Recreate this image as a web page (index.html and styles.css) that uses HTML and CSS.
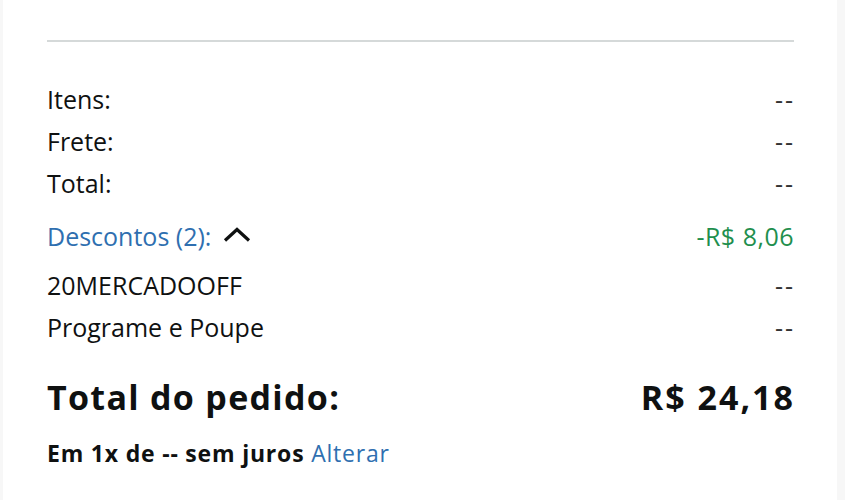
FILE: index.html
```html
<!DOCTYPE html>
<html lang="pt-BR">
<head>
<meta charset="utf-8">
<link rel="stylesheet" href="styles.css">
</head>
<body>
<div class="page">
  <div class="card">
    <div class="divider"></div>
    <div class="rows">
      <div class="row"><span>Itens:</span><span class="dash">--</span></div>
      <div class="row"><span>Frete:</span><span class="dash">--</span></div>
      <div class="row"><span>Total:</span><span class="dash">--</span></div>
      <div class="row discounts">
        <span class="toggle"><span class="link">Descontos (2):</span>
          <svg class="chev" width="28" height="15" viewBox="0 0 28 15"><path d="M2 13.5 L14 2.5 L26 13.5" fill="none" stroke="#0f1111" stroke-width="3.2"/></svg>
        </span>
        <span class="green">-R$ 8,06</span>
      </div>
      <div class="row code"><span>20MERCADOOFF</span><span class="dash">--</span></div>
      <div class="row"><span>Programe e Poupe</span><span class="dash">--</span></div>
    </div>
    <div class="grand"><span class="label">Total do pedido:</span><span class="amount">R$ 24,18</span></div>
    <div class="install">Em 1x de -- sem juros <span class="link">Alterar</span></div>
  </div>
</div>
</body>
</html>
```
FILE: styles.css
```css
html, body { margin: 0; padding: 0; }
body { background: #f7f7f7; font-family: "Open Sans", "Noto Sans", sans-serif; color: #0f1111; }
.page { display: flex; padding-left: 3px; height: 500px; }
.card { background: #fff; width: 834px; box-sizing: border-box; padding: 40px 43px 0 44px; }
.divider { height: 2px; background: #d5d9d9; }
.rows { margin-top: 36px; display: flex; flex-direction: column; }
.row { display: flex; justify-content: space-between; align-items: center; height: 42px; font-size: 25px; color: #0f1111; }
.dash { letter-spacing: 2px; margin-right: -1px; color: #333; }
.discounts { margin-top: 11px; }
.code { margin-top: 7px; }
.toggle { display: flex; align-items: center; gap: 12px; }
.chev { display: block; margin-top: -4px; }
.link { color: #2f6fb0; }
.green { color: #1f8f4e; letter-spacing: 0.5px; }
.grand { display: flex; justify-content: space-between; align-items: center; margin-top: 25px; height: 48px; font-size: 34px; font-weight: 700; }
.grand .label { letter-spacing: 1.3px; }
.grand .amount { letter-spacing: 2px; margin-right: -1px; }
.install { margin-top: 17px; height: 30px; line-height: 30px; font-size: 23px; font-weight: 700; letter-spacing: 0.8px; }
.install .link { font-weight: 400; }
```
